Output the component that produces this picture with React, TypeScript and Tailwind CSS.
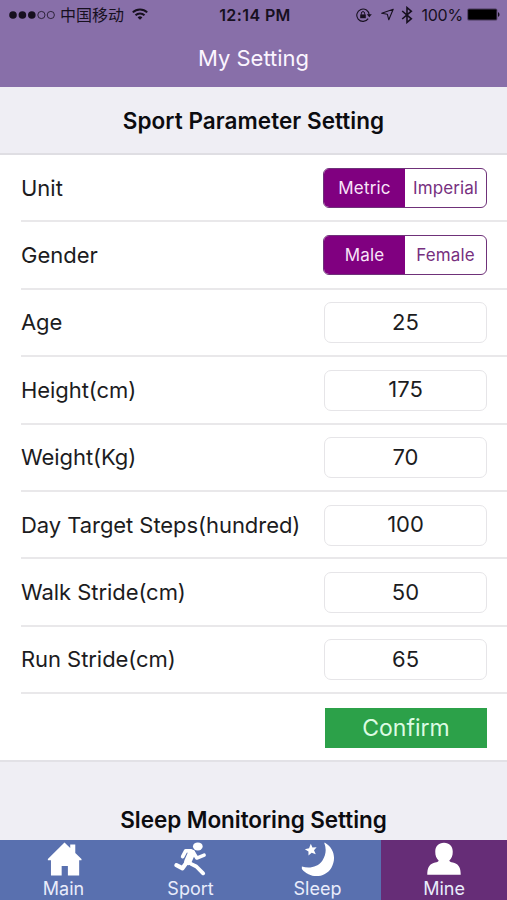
import { ReactNode } from "react"
import clsx from "clsx"

type SegmentRowProps = {
    label: string,
    options: string[],
}

type FieldRowProps = {
    label: string,
    value: string,
}

type TabProps = {
    label: string,
    active?: boolean,
    children: ReactNode,
}

const fields: FieldRowProps[] = [
    { label: "Age", value: "25" },
    { label: "Height(cm)", value: "175" },
    { label: "Weight(Kg)", value: "70" },
    { label: "Day Target Steps(hundred)", value: "100" },
    { label: "Walk Stride(cm)", value: "50" },
    { label: "Run Stride(cm)", value: "65" },
]

const StatusBar = () => {
    return (
        <div className="grid h-[30px] grid-cols-[1fr_auto_1fr] items-center pl-[9px] pr-[7px] text-[#17101f]">
            <div className="flex items-center">
                <svg width="47" height="10" viewBox="0 0 47 10" fill="currentColor">
                    <circle cx="4" cy="5" r="3.8" />
                    <circle cx="13.4" cy="5" r="3.8" />
                    <circle cx="22.8" cy="5" r="3.8" />
                    <circle cx="32.4" cy="5" r="3.6" fill="none" stroke="currentColor" strokeWidth="0.8" />
                    <circle cx="41.8" cy="5" r="3.6" fill="none" stroke="currentColor" strokeWidth="0.8" />
                </svg>
                <span className="ml-[4px] text-[16px] leading-5">中国移动</span>
                <svg className="-mt-[2px] ml-[8px]" width="16" height="12" viewBox="0 0 16 12" fill="none" stroke="currentColor" strokeWidth="2">
                    <path d="M0.8 4.4a10.2 10.2 0 0 1 14.4 0" />
                    <path d="M3.5 7.3a6.4 6.4 0 0 1 9 0" />
                    <path d="M8 11.8 5.6 9.4a3.4 3.4 0 0 1 4.8 0z" fill="currentColor" stroke="none" />
                </svg>
            </div>
            <span className="pl-px text-[16px] font-semibold leading-5 tracking-[0.4px]">12:14 PM</span>
            <div className="flex items-center justify-end">
                <svg width="16" height="14" viewBox="0 0 16 14" fill="none" stroke="currentColor">
                    <path d="M12.2 10.6A6.2 6.2 0 1 1 13.2 7" strokeWidth="1.1" />
                    <path d="M10.8 6.2h5l-2.5 3z" fill="currentColor" stroke="none" />
                    <path d="M4.2 6.4h5.6v3.8H4.2z" fill="currentColor" stroke="none" />
                    <path d="M5.4 6.6V5.2a1.6 1.6 0 0 1 3.2 0v1.4" strokeWidth="1" />
                </svg>
                <svg className="-mt-[2px] ml-[9px]" width="13" height="13" viewBox="0 0 13 13" fill="none" stroke="currentColor" strokeWidth="1.1" strokeLinejoin="round">
                    <path d="M12.2 1.2 0.7 5.2l5.6 1 1.5 5.6z" />
                </svg>
                <svg className="ml-[7px]" width="12" height="18" viewBox="0 0 12 18" fill="none" stroke="currentColor" strokeWidth="1.6">
                    <path d="M1.2 5 10.3 12.8 6 16.4V1.6l4.3 3.6L1.2 13" />
                </svg>
                <span className="ml-[8px] text-[16px] leading-5 tracking-[-0.2px]">100%</span>
                <svg className="-mt-[1px] ml-[4px]" width="33" height="13" viewBox="0 0 33 13" fill="currentColor">
                    <rect x="0.3" y="0.5" width="30" height="12" rx="1.6" opacity="0.55" />
                    <rect x="1.2" y="1.4" width="28.2" height="10.2" rx="0.8" fill="#000" />
                    <path d="M31 4.2c2 .6 2 4 0 4.6z" />
                </svg>
            </div>
        </div>
    )
}

const SegmentRow = ({ label, options }: SegmentRowProps) => {
    return (
        <div className="flex h-[67.4px] items-center justify-between border-b-2 border-[#e9e8ea] pr-5">
            <p className="text-[22px] leading-7">{label}</p>
            <div className="flex h-10 w-[164px] overflow-hidden rounded-[6px] border-[1.5px] border-[#6f3279] text-[17px]">
                {options.map((option, index) => (
                    <button key={option} className={clsx("flex items-center justify-center whitespace-nowrap pt-[1.5px]", index === 0 ? "w-[81px] bg-[#800080] tracking-[0.2px] text-[#f8e4f8]" : "flex-1 tracking-[0.1px] text-[#77307f]")}>
                        {option}
                    </button>
                ))}
            </div>
        </div>
    )
}

const FieldRow = ({ label, value }: FieldRowProps) => {
    return (
        <div className="flex h-[67.4px] items-center justify-between border-b-2 border-[#e9e8ea] pr-5 pt-px">
            <p className="pb-px text-[22px] leading-7 tracking-[-0.06px]">{label}</p>
            <div className="flex h-[41px] w-[163px] items-center justify-center rounded-[7px] border-[1.5px] border-[#e6e5e8] pb-px text-[22px]">
                {value}
            </div>
        </div>
    )
}

const Tab = ({ label, active, children }: TabProps) => {
    return (
        <button className={clsx("flex flex-col items-center pt-[2px] text-[#e9ecfb]", active ? "w-[126px] bg-[#662d77]" : "w-[127px] bg-[#5970af]")}>
            <svg width="36" height="36" viewBox="0 0 36 36" fill="#fff">{children}</svg>
            <span className="text-[18px] leading-[23px]">{label}</span>
        </button>
    )
}

export default function App() {
    return (
        <div className="flex h-[900px] w-[507px] flex-col overflow-hidden bg-[#efeef4] font-['Inter','Noto_Sans_CJK_SC',sans-serif] text-[#1c1c1e]">
            <header className="h-[87px] shrink-0 bg-[#886fa9]">
                <StatusBar />
                <h1 className="pt-[13px] text-center text-[22px] leading-[30px] text-[#fbf5ff]">My Setting</h1>
            </header>

            <h2 className="flex h-[68px] shrink-0 items-center justify-center border-b-2 border-[#dfdee3] pt-[2px] text-[22.5px] font-semibold tracking-[0.05px] text-[#0c0c10]">
                Sport Parameter Setting
            </h2>

            <main className="shrink-0 border-b-2 border-[#e2e1e6] bg-white pl-[21px]">
                <SegmentRow label="Unit" options={["Metric", "Imperial"]} />
                <SegmentRow label="Gender" options={["Male", "Female"]} />
                {fields.map((field) => (
                    <FieldRow key={field.label} label={field.label} value={field.value} />
                ))}
                <div className="flex h-[66px] items-center justify-end pr-5 pt-px">
                    <button className="h-10 w-[162px] bg-[#2ca149] text-[23px] leading-[41px] text-[#dcfbe2]">Confirm</button>
                </div>
            </main>

            <h2 className="flex flex-1 items-end justify-center pb-[5px] text-[22.5px] font-semibold leading-[30px] tracking-[-0.05px] text-[#0c0c10]">
                Sleep Monitoring Setting
            </h2>

            <nav className="flex h-[60px] shrink-0">
                <Tab label="Main">
                    <path d="M18.5.4 24.4 6.2V2.600h5.200v8.600L36 17.400v1.400h-2.400V34.400H22V24.600h-6.400v9.800H4.600V18.800H1.400v-1.400z" />
                </Tab>
                <Tab label="Sport">
                    <ellipse cx="25" cy="4.6" rx="5" ry="4.2" />
                    <g fill="none" stroke="#fff" strokeLinecap="round" strokeLinejoin="round">
                        <path d="M18.5 11.500 14.800 20" strokeWidth="7.500" />
                        <path d="M18 9.200h-5.500L9.400 15" strokeWidth="3.800" />
                        <path d="m20 10 4 6.500 7.500-3" strokeWidth="3.600" />
                        <path d="m13.500 21-4.300 6L3 23.800" strokeWidth="4.400" />
                        <path d="m18 22.500 5.500 2.700 7 7" strokeWidth="4" />
                    </g>
                </Tab>
                <Tab label="Sleep">
                    <path d="M25.2.8C34.600 6.200 37 17.400 31.800 26.400 25.400 37.200 9.600 38.200 1.400 27.800v-2.600C9 27.400 17.600 26.200 22.600 19 26.400 13 26.800 7 24.400.8z" />
                    <path d="m10.600 1.800 1.700 3.900 4.300-.4-2.700 3.300 1.800 3.900-4.200-1.400-3.300 2.900v-4.300L4.500 7.500l4.300-1.100z" />
                </Tab>
                <Tab label="Mine" active>
                    <path d="M18 .8c5.600 0 9 3.800 9 9.200 0 4-1 6.800-3.600 9.200 1.200 1.600 3 1.600 5.400 2.400 4.600 1.800 6.400 5 6.400 12.200H.8c0-7.200 1.800-10.400 6.400-12.200 2.400-.8 4.200-.8 5.400-2.400C10 16.800 9 14 9 10c0-5.400 3.400-9.200 9-9.200z" />
                </Tab>
            </nav>
        </div>
    )
}
